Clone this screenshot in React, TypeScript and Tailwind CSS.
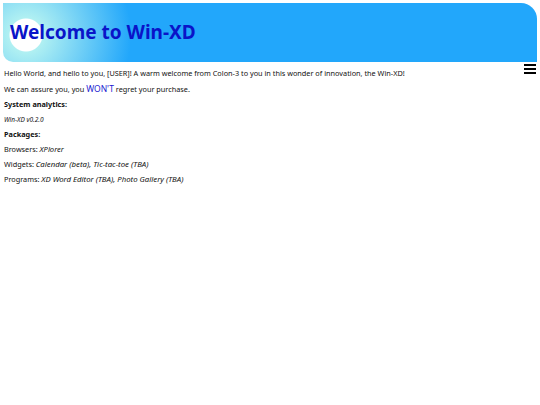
export default function App() {
  return (
    <div
      className="min-h-screen w-full bg-white text-black"
      style={{ fontFamily: '"Noto Sans", "Open Sans", sans-serif' }}
    >
      {/* Banner */}
      <header className="mx-[3px] pt-[3px]">
        <div className="flex h-[59px] items-center rounded-tr-[16px] rounded-bl-[10px] bg-[radial-gradient(circle_at_23px_32px,#ffffff_16px,#b0f0f2_17px,#22a7fb_105px)] pl-[7px]">
          <h1 className="text-[19px] font-bold leading-none text-[#0a14c8]">
            Welcome to Win-XD
          </h1>
        </div>
      </header>

      {/* Menu toggle */}
      <button className="float-right mr-[4px] mt-[1px] flex h-[12px] w-[12px] flex-col justify-between py-[1px]" aria-label="menu">
        <span className="block h-[2px] w-full bg-black" />
        <span className="block h-[2px] w-full bg-black" />
        <span className="block h-[2px] w-full bg-black" />
      </button>

      <main className="px-[4px] pt-[4px] text-[7.3px] leading-[15px] text-[#111]">
        <p>
          Hello World, and hello to you, [USER]! A warm welcome from Colon-3 to you in this wonder of innovation, the Win-XD!
        </p>
        <p>
          We can assure you, you <span className="text-[8.5px] text-[#1a1ad0]">WON'T</span> regret your purchase.
        </p>
        <p className="font-bold">System analytics:</p>
        <p className="text-[6.5px] italic">Win-XD v0.2.0</p>
        <p className="font-bold">Packages:</p>
        <p>
          Browsers: <i className="text-[7.6px]">XPlorer</i>
        </p>
        <p>
          Widgets: <i className="text-[7.8px]">Calendar (beta), Tic-tac-toe (TBA)</i>
        </p>
        <p>
          Programs: <i className="text-[7.8px]">XD Word Editor (TBA), Photo Gallery (TBA)</i>
        </p>
      </main>
    </div>
  )
}
